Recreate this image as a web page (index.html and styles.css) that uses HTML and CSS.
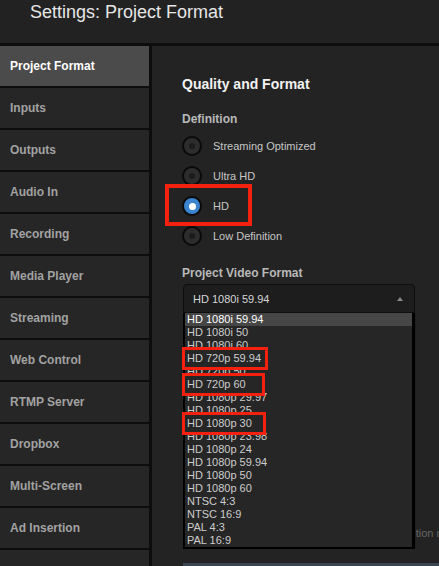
FILE: index.html
```html
<!DOCTYPE html>
<html>
<head>
<meta charset="utf-8">
<link rel="stylesheet" href="styles.css">
</head>
<body>
<div class="header"><h1 class="title">Settings: Project Format</h1></div>
<div class="main">
  <nav class="sidebar">
    <div class="nav-item active">Project Format</div>
    <div class="nav-item">Inputs</div>
    <div class="nav-item">Outputs</div>
    <div class="nav-item">Audio In</div>
    <div class="nav-item">Recording</div>
    <div class="nav-item">Media Player</div>
    <div class="nav-item">Streaming</div>
    <div class="nav-item">Web Control</div>
    <div class="nav-item">RTMP Server</div>
    <div class="nav-item">Dropbox</div>
    <div class="nav-item">Multi-Screen</div>
    <div class="nav-item">Ad Insertion</div>
    <div class="nav-item"></div>
  </nav>
  <section class="content">
    <h2 class="section-title">Quality and Format</h2>
    <h3 class="label">Definition</h3>
    <div class="radios">
      <div class="radio-row"><span class="radio"></span><span class="radio-text">Streaming Optimized</span></div>
      <div class="radio-row"><span class="radio"></span><span class="radio-text">Ultra HD</span></div>
      <div class="radio-row marked"><span class="radio checked"></span><span class="radio-text">HD</span></div>
      <div class="radio-row"><span class="radio"></span><span class="radio-text">Low Definition</span></div>
    </div>
    <h3 class="label label-format">Project Video Format</h3>
    <div class="select-wrap">
      <div class="select"><span>HD 1080i 59.94</span><span class="arrow"></span></div>
      <div class="dropdown">
        <div class="option selected">HD 1080i 59.94</div>
        <div class="option">HD 1080i 50</div>
        <div class="option">HD 1080i 60</div>
        <div class="option marked w85">HD 720p 59.94</div>
        <div class="option">HD 720p 50</div>
        <div class="option marked w82">HD 720p 60</div>
        <div class="option">HD 1080p 29.97</div>
        <div class="option">HD 1080p 25</div>
        <div class="option marked w83">HD 1080p 30</div>
        <div class="option">HD 1080p 23.98</div>
        <div class="option">HD 1080p 24</div>
        <div class="option">HD 1080p 59.94</div>
        <div class="option">HD 1080p 50</div>
        <div class="option">HD 1080p 60</div>
        <div class="option">NTSC 4:3</div>
        <div class="option">NTSC 16:9</div>
        <div class="option">PAL 4:3</div>
        <div class="option">PAL 16:9</div>
      </div>
    </div>
    <p class="hint">Changing the format will also change the resolution required for streaming.</p>
    <div class="apply-bar"></div>
  </section>
</div>
</body>
</html>
```

FILE: styles.css
```css
html, body {
  margin: 0;
  padding: 0;
}
body {
  width: 439px;
  height: 566px;
  overflow: hidden;
  background: #232323;
  font-family: "Liberation Sans", Arial, sans-serif;
}
.header {
  height: 43px;
  background: #222222;
  border-bottom: 3px solid #0d0d0d;
}
.title {
  margin: 0;
  padding: 1px 0 0 30px;
  font-size: 18px;
  line-height: 22px;
  font-weight: normal;
  color: #e6e6e6;
}
.main {
  display: flex;
  height: 520px;
}
.sidebar {
  width: 149px;
  flex: none;
  display: flex;
  flex-direction: column;
  gap: 2px;
  background: #0d0d0d;
  border-right: 3px solid #0d0d0d;
  overflow: hidden;
}
.nav-item {
  flex: none;
  height: 40px;
  display: flex;
  align-items: center;
  padding-left: 10px;
  background: #262626;
  color: #a2a2a2;
  font-size: 12px;
  font-weight: bold;
}
.nav-item.active {
  background: #4b4b4b;
  color: #ffffff;
}
.content {
  flex: 1;
  min-width: 0;
  padding: 29px 0 0 30px;
  overflow: hidden;
  background: #232323;
}
.section-title {
  margin: 0;
  font-size: 14px;
  line-height: 18px;
  font-weight: bold;
  color: #f2f2f2;
}
.label {
  margin: 19px 0 0;
  font-size: 12px;
  line-height: 14px;
  font-weight: bold;
  color: #b9b9b9;
}
.radios {
  margin-top: 5px;
  display: flex;
  flex-direction: column;
}
.radio-row {
  position: relative;
  height: 30px;
  display: flex;
  align-items: center;
  gap: 11px;
}
.radio-row.marked::after {
  content: "";
  position: absolute;
  left: -17px;
  top: -7px;
  width: 87px;
  height: 42px;
  box-sizing: border-box;
  border: 4px solid #f5210f;
}
.radio {
  width: 20px;
  height: 20px;
  box-sizing: border-box;
  border-radius: 50%;
  border: 2px solid #0a0a0a;
  background: #2d2d2d;
  display: flex;
  align-items: center;
  justify-content: center;
}
.radio::before {
  content: "";
  width: 6px;
  height: 6px;
  border-radius: 50%;
  background: #1c1c1c;
}
.radio.checked {
  background: #3b84d0;
}
.radio.checked::before {
  width: 7px;
  height: 7px;
  background: #ffffff;
}
.radio-text {
  font-size: 11px;
  color: #c6c6c6;
}
.label-format {
  margin-top: 14.5px;
}
.select-wrap {
  position: relative;
  margin: 4.5px 0 0 1px;
  width: 232px;
}
.select {
  height: 29px;
  box-sizing: border-box;
  border: 1px solid #0e0e0e;
  border-radius: 4px 4px 0 0;
  background: #1d1d1d;
  padding: 0 10px 0 9px;
  display: flex;
  align-items: center;
  justify-content: space-between;
  font-size: 11px;
  color: #d6d6d6;
}
.arrow {
  width: 0;
  height: 0;
  margin-right: 1px;
  border-left: 3px solid transparent;
  border-right: 3px solid transparent;
  border-bottom: 4px solid #8a8a8a;
}
.dropdown {
  position: absolute;
  left: 0;
  top: 100%;
  width: 232px;
  box-sizing: border-box;
  background: #262626;
  border-style: solid;
  border-color: #000;
  border-width: 0 3px 2px 2px;
  box-shadow: 1px 0 0 #1f1f1f;
  z-index: 5;
}
.option {
  height: 13px;
  line-height: 13px;
  padding-left: 2px;
  font-size: 11px;
  color: #cdcdcd;
  white-space: nowrap;
  overflow: hidden;
}
.option.selected {
  background: #464646;
  color: #ffffff;
}
.option.marked {
  position: relative;
  z-index: 1;
  margin: -5px 0 -5px -3px;
  padding: 2px 0 2px 2px;
  box-sizing: content-box;
  border: 3px solid #f5210f;
  background: #262626;
  overflow: visible;
}
.option.w85 { width: 78px; }
.option.w82 { width: 75px; }
.option.w83 { width: 76px; }
.hint {
  margin: 213px 0 0 2px;
  font-size: 11px;
  line-height: 14px;
  color: #666666;
  white-space: nowrap;
}
.apply-bar {
  margin: 22.5px 0 0 1px;
  height: 30px;
  background: #3a4551;
}
```
